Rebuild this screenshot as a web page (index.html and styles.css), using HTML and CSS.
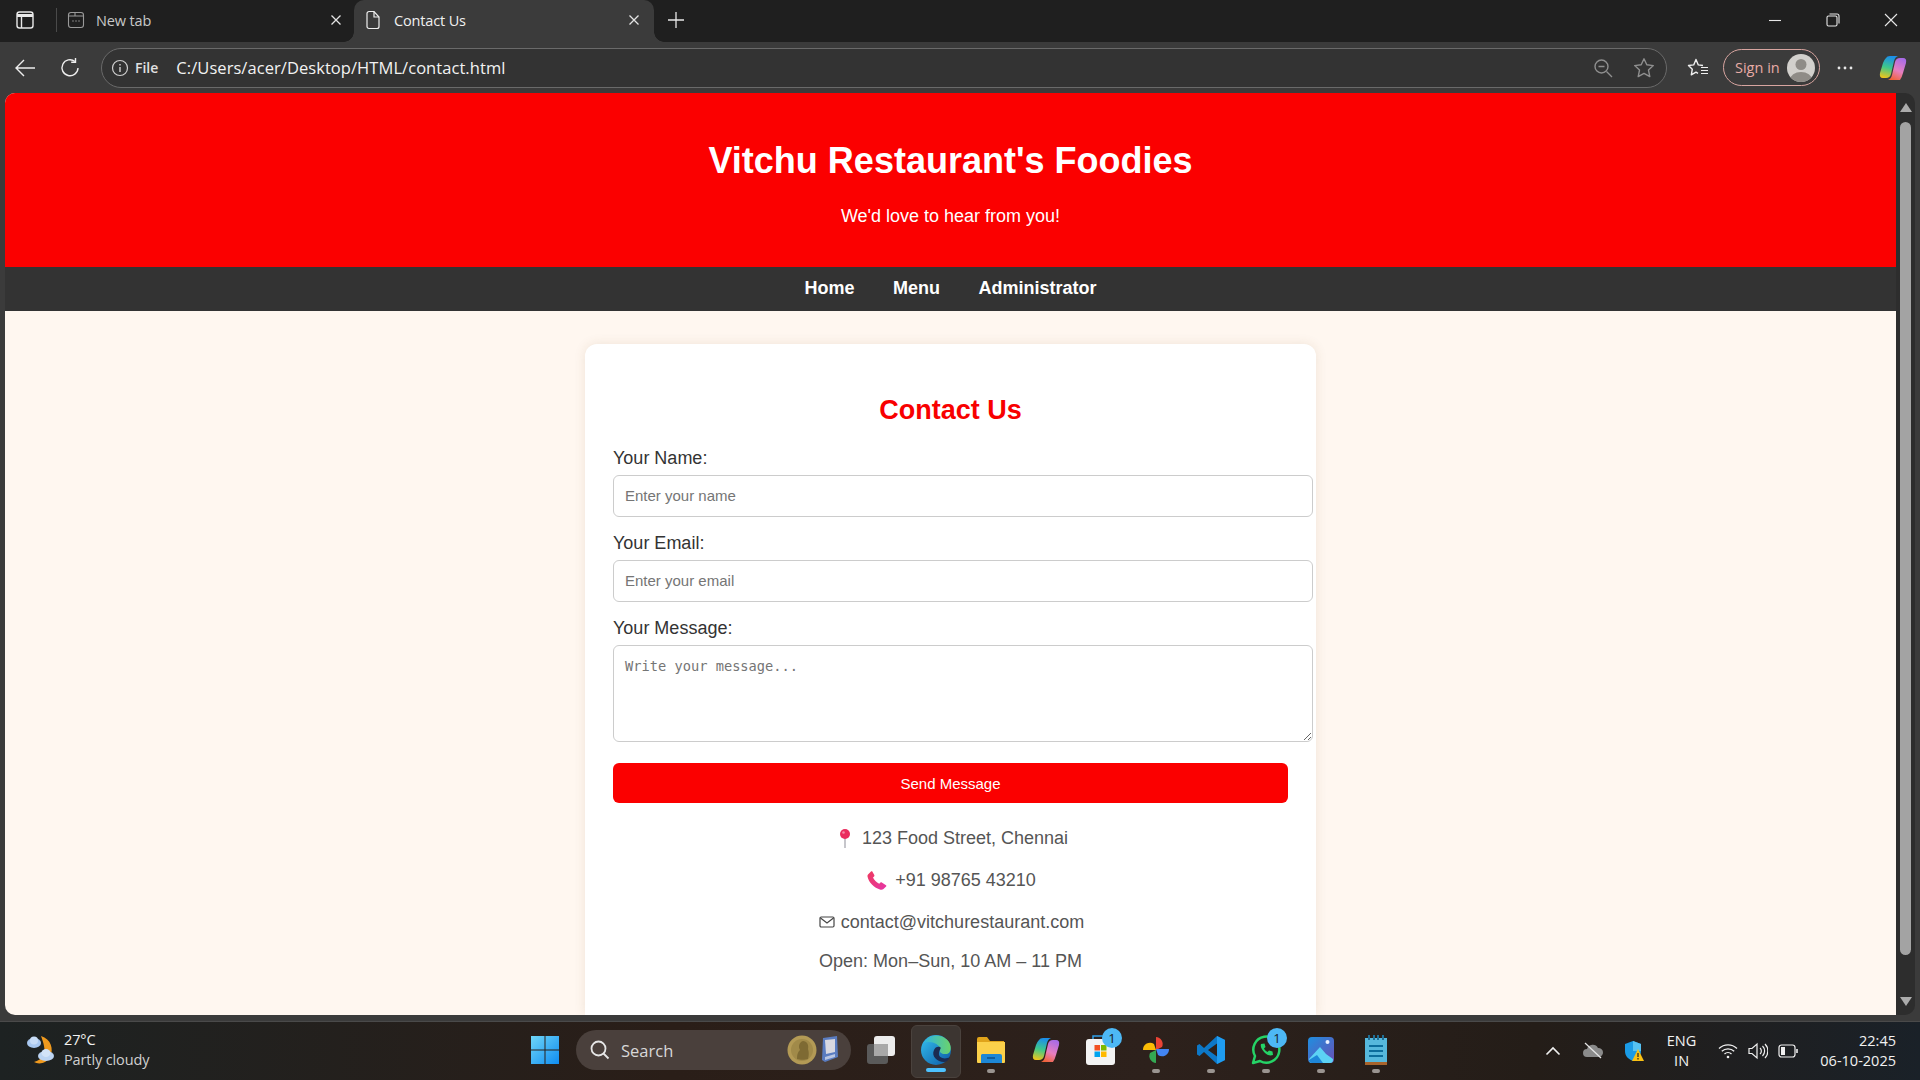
FILE: index.html
```html
<!DOCTYPE html>
<html lang="en">
<head>
<meta charset="utf-8">
<title>Contact Us</title>
<link rel="stylesheet" href="styles.css">
</head>
<body>
<div class="tabstrip">
  <svg class="sidebar-ico" width="20" height="20" viewBox="0 0 20 20" fill="none" stroke="#e8e8e8" stroke-width="1.4"><rect x="2" y="2" width="16" height="16" rx="2.5"/><path d="M2 5.500h16" stroke-width="3"/><path d="M6.500 7v11"/></svg>
  <span class="tab-sep"></span>
  <div class="tab">
    <svg width="18" height="18" viewBox="0 0 18 18" fill="none" stroke="#9a9a9a" stroke-width="1.100"><rect x="1.500" y="1.500" width="15" height="15" rx="2.500"/><path d="M1.500 5h15M8 1.500V5"/><path d="M5.500 10h1M8.500 10h1M11.500 10h1" stroke-width="1.300"/></svg>
    <span class="tab-title dim">New tab</span>
    <svg class="tab-x" width="12" height="12" viewBox="0 0 12 12" stroke="#e4e4e4" stroke-width="1.300"><path d="M1.500 1.500l9 9M10.500 1.500l-9 9"/></svg>
  </div>
  <div class="tab active">
    <svg width="18" height="20" viewBox="0 0 18 20" fill="none" stroke="#efefef" stroke-width="1.200"><path d="M3 3.500a2 2 0 0 1 2-2h5l5 5.500v9.500a2 2 0 0 1-2 2H5a2 2 0 0 1-2-2z"/><path d="M10 1.500v5.500h5"/></svg>
    <span class="tab-title">Contact Us</span>
    <svg class="tab-x" width="12" height="12" viewBox="0 0 12 12" stroke="#e4e4e4" stroke-width="1.300"><path d="M1.500 1.500l9 9M10.500 1.500l-9 9"/></svg>
  </div>
  <svg class="newtab" width="18" height="18" viewBox="0 0 18 18" stroke="#e8e8e8" stroke-width="1.300"><path d="M9 1v16M1 9h16"/></svg>
  <div class="win-controls">
    <svg width="14" height="14" viewBox="0 0 14 14" stroke="#e8e8e8" stroke-width="1.100"><path d="M1 7.500h12"/></svg>
    <svg width="14" height="14" viewBox="0 0 14 14" fill="none" stroke="#e8e8e8" stroke-width="1.100"><rect x="1" y="3" width="10" height="10" rx="1.500"/><path d="M3.500 1h7.500a2 2 0 0 1 2 2v7.500"/></svg>
    <svg width="14" height="14" viewBox="0 0 14 14" stroke="#e8e8e8" stroke-width="1.100"><path d="M1 1l12 12M13 1L1 13"/></svg>
  </div>
</div>

<div class="toolbar">
  <svg class="back" width="22" height="20" viewBox="0 0 22 20" fill="none" stroke="#ededed" stroke-width="1.400"><path d="M21 10H2M10 2l-8 8 8 8"/></svg>
  <svg class="reload" width="20" height="22" viewBox="0 0 20 22" fill="none" stroke="#ededed" stroke-width="1.400"><path d="M15 4.500A8 8 0 1 0 18 11"/><path d="M15.500 1v4.300h-4.300"/></svg>
  <div class="omnibox">
    <svg width="18" height="18" viewBox="0 0 18 18" fill="none" stroke="#d0d0d0" stroke-width="1.200"><circle cx="9" cy="9" r="7.500"/><path d="M9 8v5M9 5v1.500" stroke-width="1.400"/></svg>
    <span class="file-chip">File</span>
    <span class="url">C:/Users/acer/Desktop/HTML/contact.html</span>
    <svg class="zoom-ico" width="20" height="20" viewBox="0 0 20 20" fill="none" stroke="#8f8f8f" stroke-width="1.400"><circle cx="8.500" cy="8.500" r="6.500"/><path d="M13.500 13.500l5.500 5.500M5.500 8.500h6"/></svg>
    <svg class="star-ico" width="22" height="22" viewBox="0 0 22 22" fill="none" stroke="#8f8f8f" stroke-width="1.400" stroke-linejoin="round"><path d="M11 1.800l2.800 6 6.500.8-4.800 4.500 1.300 6.500-5.800-3.200-5.800 3.200 1.300-6.500L1.700 8.600l6.500-.8z"/></svg>
  </div>
  <svg class="fav-ico" width="22" height="20" viewBox="0 0 22 20" fill="none" stroke="#efefef" stroke-width="1.400" stroke-linejoin="round"><path d="M16 7.500l-4.700-.6L9 1.500 6.700 6.900l-5.200.6 3.800 3.700-1 5.600L9 14.200l2 1.100"/><path d="M14 9.500h7M14 12.500h7M14 15.500h7" stroke-width="1.200"/></svg>
  <div class="signin">
    <span>Sign in</span>
    <svg class="avatar" width="28" height="28" viewBox="0 0 28 28"><clipPath id="avc"><circle cx="14" cy="14" r="14"/></clipPath><circle cx="14" cy="14" r="14" fill="#d2d0cc"/><g clip-path="url(#avc)" fill="#8f8c87"><circle cx="14" cy="10.500" r="5.500"/><ellipse cx="14" cy="26" rx="11" ry="8"/></g></svg>
  </div>
  <svg class="more-ico" width="16" height="4" viewBox="0 0 16 4" fill="#e8e8e8"><circle cx="2" cy="2" r="1.400"/><circle cx="8" cy="2" r="1.400"/><circle cx="14" cy="2" r="1.400"/></svg>
  <svg class="copilot-ico" width="28" height="26" viewBox="0 0 28 26">
    <defs>
      <linearGradient id="cpa" x1="0.400" y1="0" x2="0.200" y2="1"><stop offset="0" stop-color="#1c8fe8"/><stop offset=".5" stop-color="#3fc98a"/><stop offset="1" stop-color="#f5c518"/></linearGradient>
      <linearGradient id="cpb" x1="0.700" y1="0" x2="0.300" y2="1"><stop offset="0" stop-color="#a86be6"/><stop offset=".55" stop-color="#e77fc0"/><stop offset="1" stop-color="#f0633a"/></linearGradient>
    </defs>
    <path d="M7 3Q8 1 11 1H19Q16 2 15 6L12 19Q11 23 7 23H4Q0 23 1 18L4 8Q5 5 7 3Z" fill="url(#cpa)"/>
    <path d="M21 25H9Q12 24 13 20L16 7Q17 3 21 3H24Q28 3 27 8L24 18Q23 22 21 25Z" fill="url(#cpb)"/>
  </svg>
</div>

<div class="viewport">
  <div class="page">
    <header class="hero">
      <h1>Vitchu Restaurant's Foodies</h1>
      <p>We'd love to hear from you!</p>
    </header>
    <nav class="mainnav">
      <a>Home</a><a>Menu</a><a>Administrator</a>
    </nav>
    <main class="card">
      <h2>Contact Us</h2>
      <label class="lbl">Your Name:</label>
      <input class="field" type="text" placeholder="Enter your name">
      <label class="lbl">Your Email:</label>
      <input class="field" type="email" placeholder="Enter your email">
      <label class="lbl">Your Message:</label>
      <textarea class="field area" placeholder="Write your message..."></textarea>
      <button class="send" type="button">Send Message</button>
      <p class="info info-addr">
        <svg class="emoji" width="14" height="20" viewBox="0 0 14 20"><path d="M7 9v11" stroke="#a8a8b0" stroke-width="1.300"/><circle cx="7" cy="6" r="5" fill="#ea2d5e"/><circle cx="5.500" cy="4.500" r="1.300" fill="#f78aa5"/></svg>
        <span class="addr">123 Food Street, Chennai</span>
      </p>
      <p class="info info-phone">
        <svg class="emoji" width="20" height="19" viewBox="0 0 20 19"><defs><linearGradient id="ph" x1="0" y1="0" x2="1" y2="1"><stop offset="0" stop-color="#ef3a5d"/><stop offset="1" stop-color="#e536a8"/></linearGradient></defs><path d="M1 3.500L4 .500c.500-.500 1-.500 1.300 0l2 3.500c.300.500.200 1-.200 1.400L6 6.500c1 2.500 3.500 5 6.200 6.200l1.300-1.200c.400-.400.900-.400 1.300-.100l4.200 2.800c.400.300.500.800.100 1.200L16.500 18c-.700.700-1.800 1-3 .700C7 17 1.500 11 .500 5.500.300 4.700.500 4 1 3.500z" fill="url(#ph)"/></svg>
        <span>+91 98765 43210</span>
      </p>
      <p class="info info-mail">
        <svg class="emoji" width="16" height="12" viewBox="0 0 16 12" fill="none" stroke="#444" stroke-width="1.200"><rect x="1" y="1" width="14" height="10" rx="1.200"/><path d="M1.500 2l6.500 5 6.500-5"/></svg>
        <span>contact@vitchurestaurant.com</span>
      </p>
      <p class="info info-last">Open: Mon–Sun, 10 AM – 11 PM</p>
    </main>
  </div>
  <div class="scrollbar">
    <span class="arrow-up"></span>
    <span class="thumb"></span>
    <span class="arrow-down"></span>
  </div>
</div>

<footer class="taskbar">
  <div class="weather">
    <svg width="34" height="34" viewBox="0 0 34 34">
      <path d="M17 3c10 3 13 13 9 21-3 6-11 8-16 5 8-2 12-8 10-16-.6-4-2-7-3-10z" fill="#f09a1e"/>
      <ellipse cx="10" cy="10" rx="7" ry="5" fill="#a9c8f0"/><ellipse cx="10" cy="7.500" rx="4" ry="4" fill="#c7dcf7"/>
      <ellipse cx="22" cy="23" rx="8" ry="5" fill="#bcd4f3"/><ellipse cx="22" cy="20" rx="4.500" ry="4" fill="#d3e3f8"/>
    </svg>
    <div class="weather-text"><span>27°C</span><span class="dimmer">Partly cloudy</span></div>
  </div>
  <div class="dock">
    <svg class="winlogo" width="30" height="30" viewBox="0 0 30 30"><defs><linearGradient id="wl" x1="0" y1="0" x2="1" y2="1"><stop offset="0" stop-color="#6fd6f7"/><stop offset="1" stop-color="#0f8cf0"/></linearGradient></defs><path d="M1 1h13.500v13.500H1zM15.500 1H29v13.500H15.500zM1 15.500h13.500V29H1zM15.500 15.500H29V29H15.500z" fill="url(#wl)"/></svg>
    <div class="searchbox">
      <svg width="22" height="22" viewBox="0 0 22 22" fill="none" stroke="#e6e6e6" stroke-width="1.800"><circle cx="9.500" cy="9.500" r="7"/><path d="M14.500 14.500l5 5"/></svg>
      <span>Search</span>
      <svg class="nobel" width="52" height="30" viewBox="0 0 52 30"><circle cx="15" cy="15" r="14.500" fill="#b39a55"/><circle cx="15" cy="15" r="11" fill="#a18a49"/><path d="M10 24c0-5 1-7 3-9-2-3-1-8 3-9 4 0 6 4 5 8 1 3 1 6 0 10-3 1-8 1-11 0z" fill="#7e6a33"/><path d="M36 3l14-2 1 21-13 5-3-2z" fill="#5a7cc0"/><path d="M38 5l10-1 0 13-9 2z" fill="#d8d8e0"/><path d="M38 22l10-3v3l-10 3z" fill="#b9c6e2"/></svg>
    </div>
    <div class="apps">
      <span class="app">
        <svg width="30" height="30" viewBox="0 0 30 30"><rect x="1" y="9" width="21" height="20" rx="3" fill="#5a5a5a"/><rect x="8" y="1" width="21" height="20" rx="3" fill="#ececec"/><rect x="8" y="9" width="14" height="12" fill="#a8a8a8"/></svg>
      </span>
      <span class="app current">
        <svg width="30" height="32" viewBox="0 0 30 32"><defs><linearGradient id="ed1" x1="0" y1="0" x2="1" y2="1"><stop offset="0" stop-color="#35c1f1"/><stop offset="1" stop-color="#0c59a4"/></linearGradient><linearGradient id="ed2" x1="0" y1="0" x2="1" y2="0"><stop offset="0" stop-color="#2fb5e0"/><stop offset="1" stop-color="#6bd36b"/></linearGradient></defs><circle cx="15" cy="16" r="15" fill="url(#ed1)"/><path d="M3 9C7 0 22-1 28 8c3 5 2 12-3 12-4 0-7-1-6-5 0-5-10-9-16-6z" fill="url(#ed2)"/><path d="M13 16c-3 6 3 12 10 12 2 0 5-2 6-5-5 3-12 1-11-4 0-3 3-5 1-6-2-1-5 0-6 3z" fill="#1b2c52"/></svg>
        <i class="ind wide"></i>
      </span>
      <span class="app">
        <svg width="30" height="28" viewBox="0 0 30 28"><path d="M1 3a2 2 0 0 1 2-2h8l3 4h14v21H1z" fill="#e0a31a"/><path d="M1 6h28v20a1 1 0 0 1-1 1H2a1 1 0 0 1-1-1z" fill="#fbd04a"/><path d="M6 18h18a2 2 0 0 1 2 2v7H5v-8z" fill="#1d87d6"/><path d="M11 22h8" stroke="#0d4f8a" stroke-width="1.500"/></svg>
        <i class="ind"></i>
      </span>
      <span class="app">
        <svg width="28" height="26" viewBox="0 0 28 26"><defs><linearGradient id="cq1" x1="0.400" y1="0" x2="0.200" y2="1"><stop offset="0" stop-color="#1c8fe8"/><stop offset=".5" stop-color="#3fc98a"/><stop offset="1" stop-color="#f5c518"/></linearGradient><linearGradient id="cq2" x1="0.700" y1="0" x2="0.300" y2="1"><stop offset="0" stop-color="#a86be6"/><stop offset=".55" stop-color="#e77fc0"/><stop offset="1" stop-color="#f0633a"/></linearGradient></defs><path d="M7 3Q8 1 11 1H19Q16 2 15 6L12 19Q11 23 7 23H4Q0 23 1 18L4 8Q5 5 7 3Z" fill="url(#cq1)"/><path d="M21 25H9Q12 24 13 20L16 7Q17 3 21 3H24Q28 3 27 8L24 18Q23 22 21 25Z" fill="url(#cq2)"/></svg>
      </span>
      <span class="app">
        <svg width="29" height="30" viewBox="0 0 29 30"><path d="M7 5V1h15" fill="none" stroke="#2f9fe8" stroke-width="1.500"/><rect x="0" y="4" width="29" height="26" rx="3" fill="#f3f3f3"/><rect x="8.500" y="10" width="5.500" height="5.500" fill="#f25022"/><rect x="15" y="10" width="5.500" height="5.500" fill="#7fba00"/><rect x="8.500" y="16.500" width="5.500" height="5.500" fill="#00a4ef"/><rect x="15" y="16.500" width="5.500" height="5.500" fill="#ffb900"/></svg>
        <b class="badge">1</b>
      </span>
      <span class="app">
        <svg width="28" height="28" viewBox="0 0 28 28"><path d="M14 14V1a7 7 0 0 1 6 10z" fill="#ea4335"/><path d="M14 13h13a7 7 0 0 1-11 6z" fill="#4285f4"/><path d="M14 14v13a7 7 0 0 1-6-10z" fill="#34a853"/><path d="M14 14H1a7 7 0 0 1 11-6z" fill="#fbbc05"/></svg>
        <i class="ind"></i>
      </span>
      <span class="app">
        <svg width="30" height="30" viewBox="0 0 30 30"><path fill-rule="evenodd" d="M21 1L29 5V25L21 29L8 17L3.500 21L1 19.500V10.500L3.500 9L8 13ZM21 8.500L12 15L21 21.500Z" fill="#0d78c8"/><path d="M21 1l8 4v20l-8 4z" fill="#1f9cf0"/></svg>
        <i class="ind"></i>
      </span>
      <span class="app">
        <svg width="30" height="30" viewBox="0 0 30 30" fill="none"><path d="M2 28l2-7A13 13 0 1 1 9 26z" stroke="#25d366" stroke-width="2.500" stroke-linejoin="round"/><path d="M10 9c-1 3 1 6 3.500 8.500S19 21 22 20l-.5-3.500-3.500-1-1.500 1.500c-1.500-.800-3-2.300-3.500-3.500l1.500-1.500-1-3.500z" fill="#25d366"/></svg>
        <b class="badge">1</b>
        <i class="ind"></i>
      </span>
      <span class="app">
        <svg width="26" height="26" viewBox="0 0 26 26"><defs><linearGradient id="ph1" x1="0" y1="0" x2="1" y2="1"><stop offset="0" stop-color="#1f8fe0"/><stop offset="1" stop-color="#6a4fb5"/></linearGradient></defs><rect x="0" y="0" width="26" height="26" rx="4" fill="url(#ph1)"/><circle cx="19.500" cy="5" r="2" fill="#e8f0ff"/><path d="M1 22l11-12 6 7 7 5v1a3 3 0 0 1-3 3H4a3 3 0 0 1-3-3z" fill="#5cd2f5"/><path d="M1 23l8-5 6 8H4a3 3 0 0 1-3-3z" fill="#1e86d8"/></svg>
        <i class="ind"></i>
      </span>
      <span class="app">
        <svg width="22" height="31" viewBox="0 0 22 31"><rect x="0" y="3" width="22" height="25" fill="#56b8dc"/><path d="M0 27h22v3H0z" fill="#a8642c"/><path d="M4 0v5M9 0v5M13 0v5M18 0v5" stroke="#1f6f96" stroke-width="2"/><path d="M4 11h14M4 16h14M4 21h14" stroke="#0c6d9c" stroke-width="1.800"/></svg>
        <i class="ind"></i>
      </span>
    </div>
  </div>
  <div class="tray">
    <svg class="chev" width="16" height="10" viewBox="0 0 16 10" fill="none" stroke="#f0f0f0" stroke-width="1.600"><path d="M1.500 8.500L8 2l6.500 6.500"/></svg>
    <svg class="onedrive" width="22" height="18" viewBox="0 0 22 18"><path d="M5 15a4 4 0 0 1 0-8 6 6 0 0 1 11-1 4.500 4.500 0 0 1 1 9z" fill="#8b8b8b"/><path d="M3 1l16 15" stroke="#e6e6e6" stroke-width="1.200"/></svg>
    <svg class="shield" width="20" height="22" viewBox="0 0 20 22"><path d="M9 1l8 3v7c0 5-3 8-8 10-5-2-8-5-8-10V4z" fill="#1a9be6"/><path d="M9 1l8 3v7H9z" fill="#56c2f2"/><path d="M14 9l6 12H8z" fill="#fac114"/><path d="M14 13v4M14 18v1.500" stroke="#222" stroke-width="1.200"/></svg>
    <div class="lang"><span>ENG</span><span>IN</span></div>
    <svg class="wifi" width="20" height="16" viewBox="0 0 20 16" fill="none" stroke="#f0f0f0" stroke-width="1.300"><path d="M1 5.500a13 13 0 0 1 18 0M3.800 8.300a9 9 0 0 1 12.400 0M6.500 11a5 5 0 0 1 7 0"/><circle cx="10" cy="14" r="1.300" fill="#f0f0f0" stroke="none"/></svg>
    <svg class="vol" width="20" height="18" viewBox="0 0 20 18" fill="none" stroke="#f0f0f0" stroke-width="1.200"><path d="M1 6.500h3l5-4.500v14l-5-4.500H1z"/><path d="M12 6a4 4 0 0 1 0 6M14.500 4a7 7 0 0 1 0 10M17 2a10 10 0 0 1 0 14"/></svg>
    <svg class="batt" width="20" height="14" viewBox="0 0 20 14" fill="none" stroke="#f0f0f0" stroke-width="1.200"><rect x="1" y="1" width="16" height="12" rx="2.500"/><rect x="3" y="3" width="4" height="8" fill="#f0f0f0" stroke="none"/><path d="M19 5v4" stroke-width="1.600"/></svg>
    <div class="clock"><span>22:45</span><span>06-10-2025</span></div>
  </div>
</footer>
</body>
</html>
```
FILE: styles.css
```css
* { box-sizing: border-box; }
html, body { margin: 0; padding: 0; height: 100%; overflow: hidden; }
body {
  width: 1920px; height: 1080px; display: flex; flex-direction: column;
  background: #3b3b3b; font-family: "Liberation Sans", Arial, sans-serif;
}
svg { display: block; flex: none; }

/* browser tab strip */
.tabstrip { height: 42px; background: #1f1f1f; display: flex; align-items: center; padding-left: 15px; flex: none; }
.sidebar-ico { margin: 0 21px 2px 0; }
.tab-sep { width: 1px; height: 24px; background: #4a4a4a; margin: 0 8px 2px 0; }
.tab { width: 285px; height: 42px; display: flex; align-items: center; padding: 0 8px 2px 2px; gap: 11px; }
.tab-title { flex: 1; font: 14.500px "Open Sans", sans-serif; color: #f0f0f0; letter-spacing: -.15px; }
.tab-title.dim { color: #c8c8c8; }
.tab.active { width: 300px; margin-left: 4px; background: #3b3b3b; border-radius: 10px 10px 0 0; padding: 0 14px 2px 10px; gap: 12px; position: relative; }
.tab.active::before, .tab.active::after { content: ""; position: absolute; bottom: 0; width: 10px; height: 10px; }
.tab.active::before { left: -10px; background: radial-gradient(circle at 0 0, transparent 9.500px, #3b3b3b 10px); }
.tab.active::after { right: -10px; background: radial-gradient(circle at 100% 0, transparent 9.500px, #3b3b3b 10px); }
.newtab { margin: 0 0 2px 13px; }
.win-controls { margin-left: auto; display: flex; gap: 44px; padding: 0 22px 2px 0; align-items: center; }

/* browser toolbar */
.toolbar { height: 51px; background: #3b3b3b; display: flex; align-items: center; padding: 3px 0 3px 14px; flex: none; }
.back { margin-right: 24px; }
.reload { margin-right: 21px; }
.omnibox { width: 1566px; height: 40px; border: 1px solid #6a6a6a; border-radius: 20px; background: #333; display: flex; align-items: center; padding-left: 9px; flex: none; }
.file-chip { font: 600 14px "Open Sans", sans-serif; color: #e0e0e0; margin-left: 6px; }
.url { font: 16.500px "Open Sans", sans-serif; color: #f2f2f2; margin-left: 18px; letter-spacing: .06px; }
.zoom-ico { margin-left: auto; margin-right: 20px; }
.star-ico { margin-right: 11px; }
.fav-ico { margin-left: 20px; }
.signin { margin-left: 14px; width: 97px; height: 37px; border: 1.500px solid #d8a5a0; border-radius: 19px; display: flex; align-items: center; justify-content: space-between; padding: 0 4px 0 11px; font: 14.500px "Open Sans", sans-serif; color: #e8aca6; flex: none; }
.more-ico { margin-left: 17px; }
.copilot-ico { margin-left: 26px; }

/* page viewport */
.viewport { height: 928px; flex: none; display: flex; padding: 0 5px 6px; }
.page { width: 1891px; height: 922px; background: #fff7f0; border-radius: 10px 0 0 10px; overflow: hidden; display: flex; flex-direction: column; flex: none; }
.hero { height: 174px; background: #fb0000; color: #fff; text-align: center; padding-top: 47px; flex: none; }
.hero h1 { margin: 0; font-size: 36px; line-height: 41px; font-weight: 700; }
.hero p { margin: 25px 0 0; font-size: 18px; line-height: 21px; }
.mainnav { height: 44px; background: #333; display: flex; justify-content: center; align-items: center; gap: 38.400px; flex: none; padding-bottom: 2px; }
.mainnav a { color: #fff; font-size: 18px; font-weight: 700; }
.card { width: 731px; margin: 33px auto 0; background: #fff; border-radius: 12px 12px 0 0; padding: 50px 28px 0; box-shadow: 0 0 12px rgba(120,80,40,.12); flex: 1; }
.card h2 { margin: 0 0 22px; color: #f80000; font-size: 27px; line-height: 32px; text-align: center; font-weight: 700; }
.lbl { display: block; font-size: 18px; line-height: 21px; color: #333; margin-bottom: 6px; }
.field { display: block; width: 700px; height: 42px; margin-bottom: 16px; padding: 0 11px 2px; border: 1px solid #ccc; border-radius: 6px; background: #fff; font: 15px "Liberation Sans", sans-serif; outline: 0; }
.field::placeholder { color: #757575; opacity: 1; }
.area { height: 97px; padding: 12px 11px; margin-bottom: 21px; font: 13.700px/17px "DejaVu Sans Mono", monospace; }
.send { display: block; width: 675px; height: 40px; border: 0; border-radius: 6px; background: #fb0000; color: #fff; font: 15px "Liberation Sans", sans-serif; margin-bottom: 22px; }
.info { margin: 0 0 16px; width: 675px; display: flex; justify-content: center; align-items: center; gap: 8px; font-size: 18px; line-height: 26px; color: #555; }
.info-addr { padding-left: 5px; }
.info-addr .addr { margin-left: 2px; }
.info-phone { padding-left: 2px; }
.info-mail { padding-left: 2px; gap: 6px; }
.info-last { margin-top: -3px; }
.emoji { flex: none; }

/* scrollbar */
.scrollbar { width: 19px; height: 922px; background: #2d2d2d; border-radius: 0 10px 10px 0; display: flex; flex-direction: column; align-items: center; padding: 10px 0 9px; flex: none; }
.arrow-up { width: 0; height: 0; border: 6.500px solid transparent; border-top: 0; border-bottom: 9px solid #ababab; }
.thumb { width: 11px; height: 833px; border-radius: 6px; background: #a3a3a3; margin-top: 10px; }
.arrow-down { width: 0; height: 0; border: 6.500px solid transparent; border-bottom: 0; border-top: 9px solid #ababab; margin-top: auto; }

/* windows taskbar */
.taskbar { flex: 1; min-height: 0; position: relative; display: flex; align-items: center; background: linear-gradient(90deg, #1d2222 0%, #2a1e18 35%, #2d211c 60%, #241d18 80%, #1a2128 100%); border-top: 1px solid #4a4a4a; }
.weather { display: flex; align-items: center; gap: 6px; margin: 0 0 2px 24px; }
.weather-text { display: flex; flex-direction: column; font: 14.500px/20px "Open Sans", sans-serif; color: #f2f2f2; letter-spacing: -.12px; }
.dimmer { color: #d0d0d0; }
.dock { position: absolute; left: 530px; top: 3px; display: flex; align-items: center; height: 53px; }
.winlogo { margin: 0 16px 3px 0; }
.searchbox { width: 275px; height: 40px; margin-bottom: 3px; border-radius: 20px; background: #4a403c; display: flex; align-items: center; padding-left: 13px; gap: 10px; font: 16.500px "Open Sans", sans-serif; color: #d8d8d8; }
.nobel { margin-left: auto; margin-right: 12px; }
.apps { display: flex; margin-left: 2px; }
.app { width: 55px; height: 53px; position: relative; display: flex; align-items: center; justify-content: center; border-radius: 6px; padding-bottom: 3px; }
.app.current { background: #3c3531; border: 1px solid #4a423d; width: 50px; margin: 0 2.500px; }
.ind { position: absolute; left: 50%; bottom: 5px; width: 8px; height: 4px; margin-left: -4px; border-radius: 2px; background: #9a9490; }
.ind.wide { width: 20px; margin-left: -10px; background: #4dc2ff; }
.badge { position: absolute; left: 29px; top: 3px; width: 20px; height: 20px; border-radius: 50%; background: #4db8f5; color: #16202a; font: 13px/20px "Open Sans", sans-serif; text-align: center; }

.tray { position: absolute; right: 24px; top: 0; height: 57px; display: flex; align-items: center; color: #f2f2f2; font: 14.500px/20px "Open Sans", sans-serif; }
.chev { margin-right: 21px; }
.onedrive { margin-right: 20px; }
.shield { margin-right: 23px; }
.lang { display: flex; flex-direction: column; align-items: center; margin-right: 22px; }
.wifi { margin-right: 10px; }
.vol { margin-right: 10px; }
.batt { margin-right: 22px; }
.clock { display: flex; flex-direction: column; align-items: flex-end; }
```
